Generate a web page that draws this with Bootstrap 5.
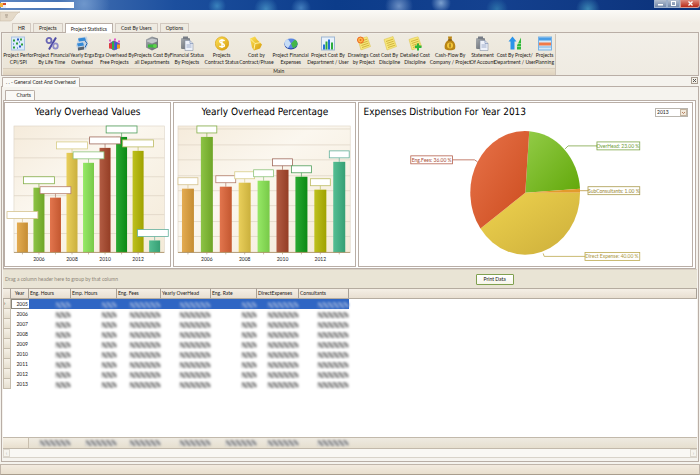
<!DOCTYPE html>
<html lang="en">
<head>
<meta charset="utf-8">
<meta name="viewport" content="width=device-width, initial-scale=1">
<title>General Cost And Overhead</title>
<link href="https://cdn.jsdelivr.net/npm/bootstrap@5.3.0/dist/css/bootstrap.min.css" rel="stylesheet">
<style>
:root{--ui:"Lato","Liberation Sans",sans-serif;--head:"DejaVu Sans Condensed","DejaVu Sans",sans-serif;--edge:#b9aea6}
body{font:5px/7px var(--ui);color:#1c1917;background:#f5f3ee;font-variant-ligatures:none}
button,select,input{font:inherit;color:inherit;font-variant-ligatures:none}
.titlebar{height:10px;background:
 radial-gradient(circle at 12% 40%,#6f97cc 0,#6f97cc00 26px),
 radial-gradient(circle at 38% 90%,#3f86bd 0,#3f86bd00 12px),
 radial-gradient(circle at 31% 60%,#3a83bd 0,#3a83bd00 9px),
 radial-gradient(circle at 43% 80%,#437ebd 0,#437ebd00 10px),
 radial-gradient(circle at 57% 60%,#6b8fc4 0,#6b8fc400 14px),
 radial-gradient(circle at 63% 30%,#7ba0cf 0,#7ba0cf00 10px),
 radial-gradient(circle at 71% 90%,#2c71a9 0,#2c71a900 11px),
 radial-gradient(circle at 84% 90%,#3a86b4 0,#3a86b400 12px),
 linear-gradient(90deg,#5d86c0,#1c4f9e 25%,#0c3c8a 48%,#14418f 70%,#0b3179)}
.app-name{width:68px;height:6px;background:#fff}
.win-btn{border:1px solid #9eb0cb;border-top:0;height:8px;color:#fff;background:linear-gradient(#b4bfd0,#7388a9);width:13px}
.win-close{width:20px;background:linear-gradient(#dc8a7d,#b92a17);border-color:#d39b94;border-radius:0 0 3px 0}
.appmenu{height:13px;background:linear-gradient(#fbfaf7,#f1ede5)}
.tabstrip{background:#f1ede5;height:9px;padding-left:12px;gap:2px}
.rtab{border:1px solid #d2c9c0;border-bottom:0;background:#eeeae1;padding:1px 5px 0;height:9px;border-radius:1px 1px 0 0;line-height:7px}
.rtab.active{background:#fff;border-color:#b9aea6;height:10px;z-index:1}
.ribbon{border:1px solid var(--edge);background:linear-gradient(#f2efe8,#efebe2);height:44px;margin:0 1px;padding:1px 0 0 1px}
.tool-grid{display:grid;height:34px;background:linear-gradient(#efebe1,#ebe5d8);
 grid-template-columns:31fr 36fr 25fr 40fr 36fr 34fr 36fr 34fr 35fr 40fr 32fr 20fr 31fr 40fr 25fr 40fr 20fr}
.group-box{width:79.5%;border-right:1px solid #cfc5b8}
.tool{border:0;background:none;padding:2px 0 0;display:flex;flex-direction:column;align-items:center;white-space:nowrap;text-align:center;line-height:7px;min-width:0}
.tool svg{width:14px;height:15px;flex:none;margin-bottom:1px}
.tool span{flex:none}
.group-cap{height:7px;background:linear-gradient(#e9dfcc,#dfd3bf);border-top:1px solid #d9cebd;line-height:5px;text-align:center}
.doc-strip{height:11px;border-bottom:1px solid var(--edge);padding:1px 1px 0;margin:0 1px}
.dtab{border:1px solid var(--edge);border-bottom:0;background:#faf9f6;border-radius:1px 2px 0 0;height:10px;line-height:9px;padding:0 3px}
.doc-close{width:7px;height:7px;border:1px solid #a79c90;background:#f3efe6;padding:0;display:flex}
.doc{border:1px solid var(--edge);border-top:0;margin:0 1px 2px;padding:3px 1px 3px;background:#f5f3ee}
.chart-strip{padding:0 2px;height:10px}
.charts{border:1px solid var(--edge);background:#fff;padding:1px 2px 1px 0;display:grid;grid-template-columns:168fr 184fr 336fr;gap:2px;margin-right:1px}
.panel{border:1px solid var(--edge);background:#fff;min-width:0;position:relative}
.panel h2{font:10px/20px var(--head);text-rendering:geometricPrecision;color:#000;margin:0;text-align:center;white-space:nowrap}
.panel svg{display:block;width:100%}
.panel text{font:5px var(--ui);fill:#222}
.year-pick{width:33px;height:9px;border:1px solid #b9b5ae;border-radius:0;background:#fff;padding:0 1px;line-height:7px;appearance:none;display:block}
.pick-box{position:absolute;right:4px;top:5px}
.pick-box svg{position:absolute;right:1px;top:1px;width:7px;height:7px;pointer-events:none}
.group-panel{height:19px;background:#e9e4d5;color:#8d8478;border-top:1px solid #d8d0c4;padding-left:2px}
.print{border:1px solid #7fa04f;background:linear-gradient(#fff,#f7f6ea);width:38px;height:11px;padding:0;line-height:9px;color:#111;margin-right:26.5%;border-radius:1px}
.data{width:100%;table-layout:fixed;border-collapse:separate;border-spacing:0;background:#fff;margin:0}
.data th{height:11px;font-weight:400;background:linear-gradient(#f5efe6,#e8dfd1);border-right:1px solid #a8a096;border-bottom:1px solid #b5aca0;border-top:1px solid #b5aca0;padding:0 1px;white-space:nowrap}
.data td{height:10px;padding:0 1px;text-align:right;line-height:8px}
.data td.val{padding:0}
.data th.ind{background:linear-gradient(#f5f0e6,#e6dfd0);border:1px solid #c5bcac;border-top:0;height:10px;line-height:7px;padding:0}
.data tr.sel .val{background:#2f66c4}
.data tr.sel .yr{border:1px solid #8a857b;border-right:0;padding-right:1px}
.c8{width:8px}.c18{width:18px}.c42{width:42px}.c44{width:44px}.c46{width:46px}.c50{width:50px}
.smudge{display:inline-block;height:6px;vertical-align:middle;filter:blur(1px);border-radius:3px;background:repeating-linear-gradient(50deg,#808080 0 1px,#dcdcdc 2px 3px,#808080 4px)}
.sel .smudge{background:repeating-linear-gradient(50deg,#8aa6d6 0 1px,#3e6fc6 2px 3px,#8aa6d6 4px)}
.w16{width:16px}.w32{width:32px}
.sum-row{height:12px;background:linear-gradient(#eeeae1,#e6dfcf);border:1px solid #c2b9ab;border-left:0;border-right:0}
.sum-lead{width:26px;border-right:1px solid #c9bfae;background:linear-gradient(#f6f1e6,#e8dfce)}
.sum-grid{display:grid;grid-template-columns:42px 46px 44px 50px 46px 42px 50px;justify-items:end;align-items:center}
.hscroll{height:9px;background:#f9f8f4;border-bottom:1px solid #d8d3c9}
.hscroll button{width:7px;height:8px;padding:0;border:1px solid #dcd7cd;background:#f6f4ee;color:#aaa;line-height:5px}
.statusbar{height:11px;background:linear-gradient(#f3ebe0,#e9dfce);border:1px solid #c0b5aa;border-bottom-color:#a89c8c}
</style>
<script src="https://cdn.jsdelivr.net/npm/bootstrap@5.3.0/dist/js/bootstrap.bundle.min.js"></script>
</head>
<body class="d-flex flex-column min-vh-100 overflow-hidden">
<svg class="position-absolute" width="0" height="0" aria-hidden="true">
 <defs>
  <linearGradient id="gold" x2="1" y2="1"><stop stop-color="#ffe45c"/><stop offset="1" stop-color="#d69a08"/></linearGradient>
  <linearGradient id="silver" x2="1" y2="1"><stop stop-color="#a9adb2"/><stop offset="1" stop-color="#5d6268"/></linearGradient>
 </defs>
 <symbol id="clip" viewBox="0 0 14 14"><rect x="1" y="1.500" width="9" height="11" rx="1" fill="url(#silver)"/><rect x="3" y="0" width="5" height="2.500" fill="#777c85"/><path d="M5 4h5l3 3v7H5z" fill="#eef2fa" stroke="#8a93a8" stroke-width=".6"/><path d="M10 4v3h3M6.500 8.500h5M6.500 10.500h5" stroke="#7d8fb5" stroke-width=".7" fill="none"/></symbol>
 <symbol id="note" viewBox="0 0 14 14"><path d="M1 3 10 0l3.500 10L4 13.500z" fill="#f7e77a" stroke="#d9bf45" stroke-width=".5"/><path d="m3 5 7-2.300M3.700 7l7-2.300M4.400 9l7-2.300M5 11l7-2.300" stroke="#c09c25" stroke-width=".7"/></symbol>
</svg>

<header class="titlebar d-flex justify-content-between">
 <div class="d-flex align-items-center">
  <svg width="6" height="8" viewBox="0 0 6 8"><rect x="1" y="1" width="5" height="6" fill="#e9f0fb"/><rect y="2" width="3" height="4" fill="#f4b23c"/><rect x="3" y="2" width="3" height="2" fill="#d84b2a"/></svg>
  <div class="app-name"></div>
 </div>
 <div class="d-flex">
  <button class="win-btn p-0 d-flex justify-content-center" aria-label="Minimize"><svg width="7" height="7" viewBox="0 0 7 7"><rect x="1" y="4" width="5" height="1.500" fill="#fff"/></svg></button>
  <button class="win-btn p-0 d-flex justify-content-center" aria-label="Maximize"><svg width="7" height="7" viewBox="0 0 7 7"><rect x="1.500" y="1.500" width="4" height="4" fill="none" stroke="#fff"/></svg></button>
  <button class="win-btn win-close p-0 d-flex justify-content-center" aria-label="Close"><svg width="7" height="7" viewBox="0 0 7 7"><path d="m1.500 1.500 4 4m0-4-4 4" stroke="#fff" stroke-width="1.300"/></svg></button>
 </div>
</header>
<div class="appmenu"><svg class="d-block" width="21" height="13" viewBox="0 0 21 13"><path d="M0 2h20c-5 1-6 9-10 9H0z" fill="#e4d9c8" stroke="#cbbda9" stroke-width=".6"/><path d="M5 5h3M5.500 7h2" stroke="#8c7f6e" stroke-width=".8"/></svg></div>
<nav class="tabstrip d-flex align-items-start">
 <button class="rtab">HR</button><button class="rtab">Projects</button><button class="rtab active position-relative">Project Statistics</button><button class="rtab">Cost By Users</button><button class="rtab">Options</button>
</nav>

<section class="ribbon">
 <div class="group-box">
  <div class="tool-grid">
   <button class="tool"><svg viewBox="0 0 14 14"><rect x=".5" y=".5" width="13" height="13" fill="#dcebfa" stroke="#a9c3e2"/><path d="M2 3h2v2H2zM9 2h2v2H9zM5 6h2v2H5zM10 7h2v2h-2zM2 10h2v2H2z" fill="#2c9d38"/><path d="M6 2h2v2H6zM2 7h1v1H2zM8 9h2v2H8zM6 11h1v1H6zM8 5h1v1H8z" fill="#2959c4"/></svg><span>Project Perfor<br>CPI/SPI</span></button>
   <button class="tool"><svg viewBox="0 0 14 14" fill="none"><path d="M11 1 4 13" stroke="#4d4aa5" stroke-width="2"/><ellipse cx="4" cy="4" rx="2.500" ry="2.700" stroke="#6966b5" stroke-width="1.800"/><ellipse cx="10.500" cy="9.500" rx="2.300" ry="2.600" stroke="#8f8cc9" stroke-width="1.800"/></svg><span>Project Financial<br>By Life Time</span></button>
   <button class="tool"><svg viewBox="0 0 14 14"><path d="M4 1 12 0l1 8-2 5-8 1-2-5z" fill="#c7d4e2"/><path d="m3 2 7-1 1 3-7 1zM2 7l6-1 1 3-6 1z" fill="#3489d6"/><path d="m3 11 6-1v3l-6 1z" fill="#59636e"/><path d="m10 4 2 3-2 4" stroke="#1c65b4" fill="none"/></svg><span>Yearly Erga<br>Overhead</span></button>
   <button class="tool"><svg viewBox="0 0 14 14"><path d="m2 7 5-3 6 3v4l-6 3-5-3z" fill="#7b4ab0"/><path d="M2 7h3v5H2z" fill="#e23a3a"/><path d="M5 5h2v8H5z" fill="#2fae46"/><path d="M8 6h2v7H8z" fill="#2b62d6"/><path d="M10 8h3v4h-3z" fill="#f29a1e"/><path d="M2 3h2v2H2zM7 2h2v2H7zM11 4h2v2h-2z" fill="#e25cc4"/></svg><span>Erga Overhead By<br>Free Projects</span></button>
   <button class="tool"><svg viewBox="0 0 14 14"><path d="m1 3 6-3 6 2v9l-6 3-6-3z" fill="url(#silver)"/><path d="m2 4 5-2 5 1v2L7 7 2 5z" fill="#c3c7cb"/><path d="M3 8h7v3H3z" fill="#37ba3a"/><circle cx="10" cy="9.500" r="2" fill="#5fd24c"/></svg><span>Projects Cost By<br>all Departments</span></button>
   <button class="tool"><svg><use href="#clip"/></svg><span>Financial Status<br>By Projects</span></button>
   <button class="tool"><svg viewBox="0 0 14 14"><circle cx="7" cy="7" r="6.700" fill="url(#gold)" stroke="#d39a0c" stroke-width=".6"/><path d="M9.500 4.500C8.500 3 4.600 3.200 4.800 5.300 5 7.200 9.300 6.600 9.400 8.800c.1 2-3.900 2.100-5 .5M7 2.500v9" fill="none" stroke="#fff" stroke-width="1.400"/></svg><span>Projects<br>Contract Status</span></button>
   <button class="tool"><svg viewBox="0 0 14 14"><path d="m1 2 5-2 2 3 5 5-2 4-6 2-2-3z" fill="url(#gold)"/><path d="m1 2 5 5 6-1M6 7l-1 6" stroke="#fff2a0" fill="none"/></svg><span>Cost by<br>Contract/Phase</span></button>
   <button class="tool"><svg viewBox="0 0 14 14"><ellipse cx="7" cy="8" rx="6.500" ry="5" fill="#22409f"/><ellipse cx="7" cy="7" rx="6.500" ry="5" fill="#5a85e2"/><path d="M7 7 4 2.600A6.500 5 0 0 0 4 11.400z" fill="#c6dcf5"/><path d="m7 7 4-4a6.500 5 0 0 1-2 8.700z" fill="#43b649"/></svg><span>Project Financial<br>Expenses</span></button>
   <button class="tool"><svg viewBox="0 0 14 14"><rect x=".5" y=".5" width="13" height="13" fill="#e9f2fb" stroke="#9eb6d4"/><path d="M2 8h2v5H2zM7 3h2v10H7z" fill="#2472d8"/><path d="M4.500 5h2v8h-2zM10 6h2v7h-2z" fill="#2eac3b"/></svg><span>Project Cost By<br>Department / User</span></button>
   <button class="tool"><svg viewBox="0 0 14 14"><use href="#note"/><circle cx="3.500" cy="3.500" r="3" fill="#ffbb4a" stroke="#ed6520"/><circle cx="3.500" cy="3.500" r="1" fill="#ed6520"/></svg><span>Drawings Cost<br>by Project</span></button>
   <button class="tool"><svg><use href="#note"/></svg><span>Cost By<br>Discipline</span></button>
   <button class="tool"><svg viewBox="0 0 14 14"><use href="#note"/><path d="M9 7h2v2h2.500v2.500H11V14H9v-2.500H7V9h2z" fill="#2fb63b"/></svg><span>Detailed Cost<br>Discipline</span></button>
   <button class="tool"><svg viewBox="0 0 14 14"><path d="M5 0h4L8.500 3.500C12 5.500 13 9 12 12.500 10 14.300 4 14.300 2 12.500 1 9 2 5.500 5.500 3.500z" fill="#b98516"/><path d="M5 3.500h4" stroke="#6e4a08"/><circle cx="7" cy="9" r="3" fill="#f3c63a"/><path d="M7 7v4" stroke="#7b560a"/></svg><span>Cash-Flow By<br>Company / Project</span></button>
   <button class="tool"><svg><use href="#clip"/></svg><span>Statement<br>Of Account</span></button>
   <button class="tool"><svg viewBox="0 0 14 14"><path d="m4.500 0 4 5h-2v8h-4V5h-2z" fill="#2b94ea"/><path d="M9 13V9l4-8v12z" fill="#32b83a"/><path d="M9 10h4M9 7h4" stroke="#c7f1c3" stroke-width=".6"/></svg><span>Cost By Project/<br>Department / User</span></button>
   <button class="tool"><svg viewBox="0 0 14 14"><rect x=".5" y=".5" width="13" height="13" fill="#d4e9fa" stroke="#79b2e4"/><path d="M1 1h12v3H1z" fill="#4a9ee6"/><path d="M1 6h12v3H1z" fill="#f17a49"/><path d="M1 10.500h12" stroke="#79b2e4"/></svg><span>Projects<br>Planning</span></button>
  </div>
  <div class="group-cap">Main</div>
 </div>
</section>

<nav class="doc-strip d-flex justify-content-between align-items-start">
 <button class="dtab">. . - General Cost And Overhead</button>
 <button class="doc-close" aria-label="Close tab"><svg width="5" height="5" viewBox="0 0 5 5"><path d="m1 1 3 3m0-3L1 4" stroke="#555"/></svg></button>
</nav>

<main class="doc d-flex flex-column flex-grow-1">
 <div class="chart-strip"><button class="dtab ps-2">&nbsp; Charts</button></div>
 <section class="charts">
  <div class="panel"><h2>Yearly Overhead Values</h2><svg id="values" viewBox="0 0 166 144"></svg></div>
  <div class="panel"><h2>Yearly Overhead Percentage</h2><svg id="percent" viewBox="0 0 182 144"></svg></div>
  <div class="panel"><h2 class="text-start ps-1">Expenses Distribution For Year 2013</h2>
   <div class="pick-box"><select class="year-pick" aria-label="Year"><option>2013</option></select><svg viewBox="0 0 7 7"><rect x=".5" y=".5" width="6" height="6" fill="#f1e9dc" stroke="#c3b49f"/><path d="m2 3 1.500 1.500L5 3" stroke="#a0562b" stroke-width=".7" fill="none"/></svg></div>
   <svg viewBox="0 0 334 144">
    <defs>
     <linearGradient id="pg" x2="1" y2="1"><stop stop-color="#93cc48"/><stop offset="1" stop-color="#62a80a"/></linearGradient>
     <linearGradient id="py" x2="1" y2="1"><stop stop-color="#efd34f"/><stop offset="1" stop-color="#ccae3a"/></linearGradient>
     <linearGradient id="pr" x2="1" y2="1"><stop stop-color="#e8734a"/><stop offset="1" stop-color="#cb4b1d"/></linearGradient>
    </defs>
    <path d="M167 70 171 8.200A55 62 0 0 1 222 66z" fill="url(#pg)"/>
    <path d="M167 70 222 66V70z" fill="#e39a2c"/>
    <path d="M167 70H222A55 62 0 0 1 122 106z" fill="url(#py)"/>
    <path d="M167 70 122 106A55 62 0 0 1 171 8.200z" fill="url(#pr)"/>
    <g fill="none" stroke-width=".8">
     <path d="m207 26 3-3h29" stroke="#7da446"/><rect x="239" y="19" width="43" height="8" stroke="#7da446"/>
     <path d="M222 68h8" stroke="#b8953c"/><rect x="230" y="64" width="52" height="8" stroke="#a99a4c"/>
     <path d="m185 131 1 3h41" stroke="#bca94e"/><rect x="227" y="130" width="55" height="8" stroke="#bca94e"/>
     <path d="m119 39-3-2H94" stroke="#b5604c"/><rect x="52" y="33" width="42" height="8" stroke="#b5604c"/>
    </g>
    <g text-anchor="middle">
     <text x="260" y="25" style="fill:#6d9a32">OverHead: 23.00 %</text>
     <text x="256" y="70" style="fill:#988532">SubConsultants: 1.00 %</text>
     <text x="254" y="136" style="fill:#ab973d">Direct Expense: 40.00 %</text>
     <text x="73" y="39" style="fill:#a84c38">Eng.Fees: 36.00 %</text>
    </g>
   </svg>
  </div>
 </section>
 <div class="group-panel d-flex justify-content-between align-items-center"><span>Drag a column header here to group by that column</span><button class="print">Print Data</button></div>
 <section class="bg-white d-flex flex-column flex-grow-1">
  <table class="data">
   <colgroup><col class="c8"><col class="c18"><col class="c42"><col class="c46"><col class="c44"><col class="c50"><col class="c46"><col class="c42"><col class="c50"><col></colgroup>
   <thead><tr><th></th><th class="text-center">Year</th><th>Eng. Hours</th><th>Emp. Hours</th><th>Eng. Fees</th><th>Yearly OverHead</th><th>Eng. Rate</th><th>DirectExpenses</th><th>Consultants</th><th></th></tr></thead>
   <tbody id="rows"></tbody>
  </table>
  <div class="mt-auto sum-row d-flex">
   <div class="sum-lead"></div>
   <div class="sum-grid"><i class="smudge w32"></i><i class="smudge w32"></i><i class="smudge w32"></i><i class="smudge w32"></i><i class="smudge w32"></i><i class="smudge w32"></i><i class="smudge w32"></i></div>
  </div>
  <div class="hscroll d-flex justify-content-between"><button aria-label="Scroll left">‹</button><button aria-label="Scroll right">›</button></div>
 </section>
</main>
<footer class="statusbar"></footer>

<script>
const colors = ['#e0a03a','#7dbb2c','#de6336','#e6c845','#88e552','#a8462a','#0d9d17','#b5b800','#3db584'];
const frames = ['#d5c38f','#86b04c','#b37d6b','#d8cd88','#8dc47c','#a06a5c','#4f9f5c','#bcbb62','#63b09b'];
function bars(id, o) {
  let s = `<defs><linearGradient id="${id}bg" x2="1" y2="1"><stop stop-color="#f5ebdb"/><stop offset=".4" stop-color="#fbf7ef"/><stop offset="1" stop-color="#f4ead8"/></linearGradient>
  <linearGradient id="${id}sh"><stop stop-color="#fff" stop-opacity=".12"/><stop offset="1" stop-color="#000" stop-opacity=".12"/></linearGradient></defs>
  <rect x="${o.x}" y="3" width="${o.w}" height="127" fill="url(#${id}bg)" stroke="#ddd3c3" stroke-width=".6"/>`;
  o.grid.forEach(y => s += `<path d="M${o.x} ${y}h${o.w}" stroke="#ddd3c3" stroke-width=".7"/>`);
  o.tops.forEach((t, i) => {
    const c = o.first + i * o.step, box = `x="${c - o.bar / 2}" y="${t}" width="${o.bar}" height="${130 - t}"`;
    s += `<rect ${box} fill="${colors[i]}"/><rect ${box} fill="url(#${id}sh)"/>`;
  });
  o.tops.forEach((t, i) => {
    const c = o.first + i * o.step, w = o.tag, x = Math.min(c - w / 2, o.x + o.w + 4 - w);
    s += `<path d="M${c} ${t}v-5" stroke="${frames[i]}" stroke-width=".7"/><rect x="${x}" y="${t - 11}" width="${w}" height="7" fill="#fff" stroke="${frames[i]}" stroke-width=".8"/>`;
    s += `<path d="M${c} 130v2" stroke="#a58a5e" stroke-width=".6"/>`;
    if (i % 2 && i < 8) s += `<text x="${c}" y="139" text-anchor="middle">${2005 + i}</text>`;
  });
  s += `<path d="M${o.x} 130h${o.w}" stroke="#a58a5e" stroke-width=".8"/>`;
  document.getElementById(id).innerHTML = s;
}
bars('values', {x:9, w:151, first:17.5, step:16.6, bar:11, tag:31, tops:[100,65,75,30,40,25,14,28,118], grid:[16,35,54,73,92,111]});
bars('percent', {x:4, w:173, first:14, step:19, bar:12, tag:20, tops:[66,14,64,60,58,47,54,67,39], grid:[6,22,37,53,68,83,99,114]});

const widths = ['w16','w16','w32','w32','w16','w32','w32'];
document.getElementById('rows').innerHTML = Array.from({length: 9}, (_, i) =>
  `<tr class="${i ? '' : 'sel'}"><th class="ind">${i ? '' : '›'}</th><td class="yr">${2005 + i}</td>` +
  widths.map(w => `<td class="val"><i class="smudge ${w}"></i></td>`).join('') + '<td></td></tr>').join('');
</script>
</body>
</html>
